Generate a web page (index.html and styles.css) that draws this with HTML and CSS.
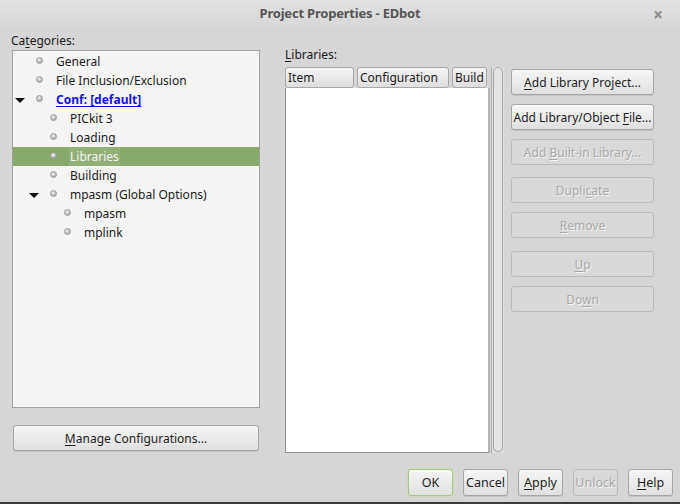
FILE: index.html
```html
<!DOCTYPE html>
<html>
<head>
<meta charset="utf-8">
<link rel="stylesheet" href="styles.css">
</head>
<body>
<div class="window">
  <div class="titlebar">
    <span class="title">Project Properties - EDbot</span>
    <span class="close">×</span>
  </div>
  <div class="main">
    <div class="leftcol">
      <div class="label">Ca<u>t</u>egories:</div>
      <div class="tree">
        <div class="row lv0"><span class="arrow"></span><span class="bullet"></span><span class="txt">General</span></div>
        <div class="row lv0"><span class="arrow"></span><span class="bullet"></span><span class="txt">File Inclusion/Exclusion</span></div>
        <div class="row lv0"><span class="arrow open"></span><span class="bullet"></span><span class="txt link">Conf: [default]</span></div>
        <div class="row lv1"><span class="arrow"></span><span class="bullet"></span><span class="txt">PICkit 3</span></div>
        <div class="row lv1"><span class="arrow"></span><span class="bullet"></span><span class="txt">Loading</span></div>
        <div class="row lv1 sel"><span class="arrow"></span><span class="bullet"></span><span class="txt">Libraries</span></div>
        <div class="row lv1"><span class="arrow"></span><span class="bullet"></span><span class="txt">Building</span></div>
        <div class="row lv1"><span class="arrow open"></span><span class="bullet"></span><span class="txt">mpasm (Global Options)</span></div>
        <div class="row lv2"><span class="arrow"></span><span class="bullet"></span><span class="txt">mpasm</span></div>
        <div class="row lv2"><span class="arrow"></span><span class="bullet"></span><span class="txt">mplink</span></div>
      </div>
      <div class="btn manage"><span><u>M</u>anage Configurations...</span></div>
    </div>
    <div class="midcol">
      <div class="label"><u>L</u>ibraries:</div>
      <div class="tablewrap">
        <div class="table">
          <div class="thead">
            <div class="th c1">Item</div>
            <div class="th c2">Configuration</div>
            <div class="th c3">Build</div>
          </div>
          <div class="tbody"></div>
        </div>
        <div class="scroll"><div class="thumb"></div></div>
      </div>
    </div>
    <div class="rightcol">
      <div class="btn side b1"><span><u>A</u>dd Library Project...</span></div>
      <div class="btn side b2"><span>Add Library/Object <u>F</u>ile...</span></div>
      <div class="btn side b3 dis"><span>Add <u>B</u>uilt-in Library...</span></div>
      <div class="btn side b4 dis"><span>Dupli<u>c</u>ate</span></div>
      <div class="btn side b5 dis"><span><u>R</u>emove</span></div>
      <div class="btn side b6 dis"><span><u>U</u>p</span></div>
      <div class="btn side b7 dis"><span>Do<u>w</u>n</span></div>
    </div>
  </div>
  <div class="footer">
    <div class="btn foot focus"><span>OK</span></div>
    <div class="btn foot"><span>Cancel</span></div>
    <div class="btn foot"><span><u>A</u>pply</span></div>
    <div class="btn foot dis"><span>Unlock</span></div>
    <div class="btn foot"><span><u>H</u>elp</span></div>
  </div>
</div>
<div class="frame"></div>
</body>
</html>
```
FILE: styles.css
```css
* { box-sizing: border-box; }
html, body { margin: 0; padding: 0; }
body {
  width: 680px;
  height: 504px;
  overflow: hidden;
  background: #d6d6d6;
  font-family: "Noto Sans", "Open Sans", sans-serif;
  font-size: 12px;
  color: #1a1a1a;
}
.window {
  height: 502px;
  display: flex;
  flex-direction: column;
  background: #d6d6d6;
}
.frame { height: 2px; background: #3a3a3a; }
u { text-decoration: underline; text-underline-offset: 2px; }

.titlebar {
  height: 26px;
  display: flex;
  align-items: center;
  justify-content: center;
  position: relative;
  background: linear-gradient(#e2e2e2, #d8d8d8);
}
.title {
  font-weight: bold;
  font-size: 13px;
  color: #555;
  letter-spacing: -0.2px;
}
.close {
  position: absolute;
  right: 17px;
  top: 3px;
  font-size: 17px;
  font-weight: bold;
  color: #8a8a8a;
}

.main {
  display: flex;
  height: 441px;
}
.label {
  height: 16px;
  line-height: 16px;
}

.leftcol {
  margin-left: 11px;
  width: 249px;
  display: flex;
  flex-direction: column;
  padding-top: 7px;
}
.tree {
  margin-top: 1px;
  margin-left: 1px;
  height: 358px;
  border: 1px solid #a2a2a2;
  background: #f5f5f5;
  padding-top: 1px;
}
.row {
  height: 19px;
  display: flex;
  align-items: center;
}
.lv1 { padding-left: 14px; }
.lv2 { padding-left: 28px; }
.arrow {
  width: 14px;
  height: 19px;
  display: flex;
  align-items: center;
  justify-content: center;
}
.arrow.open::before {
  content: "";
  border-left: 5px solid transparent;
  border-right: 5px solid transparent;
  border-top: 5px solid #111;
  margin-top: 1px;
}
.bullet {
  width: 7px;
  height: 7px;
  margin-left: 9px;
  margin-right: 13px;
  margin-top: -3px;
  border-radius: 50%;
  background: radial-gradient(circle at 40% 35%, #f4f4f4, #a9a9a9 75%);
  border: 1px solid #9c9c9c;
}
.txt { line-height: 19px; }
.link {
  font-weight: bold;
  color: #1010e8;
  text-decoration: underline;
  text-underline-offset: 2px;
}
.sel { background: #89a86c; }
.sel .txt {
  color: #f4f4f4;
  background: #93b076;
  padding: 0 1px;
  margin-left: -1px;
}

.btn {
  display: flex;
  align-items: center;
  justify-content: center;
  border: 1px solid #a6a6a6;
  border-radius: 3px;
  background: linear-gradient(#f6f6f6, #e0e0e0);
  color: #1e1e1e;
  box-shadow: 0 1px 0 rgba(0,0,0,0.08);
  white-space: nowrap;
}
.btn.dis {
  background: #d9d9d9;
  border-color: #bcbcbc;
  color: #a9a9a9;
  text-shadow: 1px 1px 0 #f4f4f4;
  box-shadow: none;
}
.manage {
  margin-top: 17px;
  margin-left: 2px;
  width: 246px;
  height: 26px;
}

.midcol {
  margin-left: 25px;
  width: 219px;
  padding-top: 21px;
  display: flex;
  flex-direction: column;
}
.tablewrap {
  margin-top: 4px;
  display: flex;
  height: 386px;
}
.table {
  width: 206px;
  display: flex;
  flex-direction: column;
}
.thead {
  height: 21px;
  display: flex;
  gap: 3px;
}
.th {
  height: 21px;
  border: 1px solid #a8a8a8;
  border-radius: 3px;
  background: linear-gradient(#f4f4f4, #dedede);
  padding-left: 2px;
  line-height: 19px;
}
.c1 { width: 69px; }
.c2 { width: 92px; }
.c3 { width: 35px; }
.tbody {
  flex: 1;
  background: #fff;
  border: 1px solid #919191;
  border-top: none;
  border-right: 2px solid #b4b4b4;
}
.scroll {
  width: 13px;
  margin-left: 1px;
  border-left: 1px solid #b0b0b0;
  padding: 0 1px 1px 1px;
  background: #dedede;
}
.thumb {
  height: 100%;
  border: 1px solid #a5a5a5;
  border-radius: 6px;
  background: #e4e4e4;
}

.rightcol {
  margin-left: 7px;
  width: 143px;
  padding-top: 43px;
  display: flex;
  flex-direction: column;
}
.side { height: 26px; }
.b2 { margin-top: 9px; }
.b3 { margin-top: 9px; }
.b4 { margin-top: 12px; }
.b5 { margin-top: 9px; }
.b6 { margin-top: 13px; }
.b7 { margin-top: 9px; }

.footer {
  display: flex;
  justify-content: flex-end;
  gap: 10px;
  padding-right: 7px;
  padding-top: 2px;
}
.foot {
  width: 45px;
  height: 27px;
  font-size: 12.5px;
}
.focus {
  border: 1px solid #a7c58a;
  box-shadow: 0 0 0 1px #c9dcb6;
}
```
